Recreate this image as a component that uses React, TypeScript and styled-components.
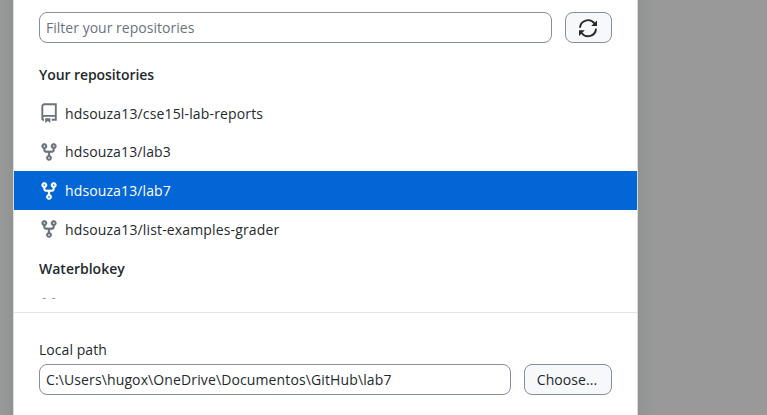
import React from 'react';
import styled, { createGlobalStyle } from 'styled-components';

const GlobalStyle = createGlobalStyle`
  * { box-sizing: border-box; }
  body { margin: 0; background: #999; overflow: hidden; }
  body, button, input { font-family: 'Open Sans', 'Noto Sans', sans-serif; font-size: 14px; color: #24292e; }
`;

const Backdrop = styled.div`
  height: 415px;
  padding-left: 13px;
  background: linear-gradient(90deg, #999 0, #919393 13px, #919393 638px, #999 656px);
`;

const Dialog = styled.main`
  width: 625px;
  height: 415px;
  display: flex;
  flex-direction: column;
  background: #fff;
  border: solid #dadddf;
  border-width: 0 1px;
`;

const FilterRow = styled.div`
  display: flex;
  gap: 13px;
  padding: 12px 25px 0;
`;

const TextBox = styled.input<{ $spacing: number }>`
  flex: 1;
  min-width: 0;
  height: 31px;
  padding: 0 6px;
  border: 1px solid #868e99;
  border-radius: 8px;
  background: #fff;
  outline: none;
  letter-spacing: ${(p) => p.$spacing}px;
  &::placeholder { color: #6a737d; opacity: 1; }
`;

const Button = styled.button<{ $width: number }>`
  width: ${(p) => p.$width}px;
  height: 31px;
  padding: 0 2px 0 0;
  display: flex;
  align-items: center;
  justify-content: center;
  border: 1px solid #868e99;
  border-radius: 8px;
  background: #f6f8fa;
`;

const List = styled.div`
  height: 244px;
  margin-top: 12px;
  overflow: hidden;
`;

const Row = styled.div<{ $selected?: boolean }>`
  height: 38.75px;
  display: flex;
  align-items: center;
  gap: 6px;
  padding: 0 25px;
  white-space: nowrap;
  background: ${(p) => (p.$selected ? '#0366d6' : 'transparent')};
  color: ${(p) => (p.$selected ? '#fff' : '#24292e')};
  svg { color: ${(p) => (p.$selected ? '#fff' : '#6a737d')}; }
`;

const GroupTitle = styled(Row)`
  font-weight: 600;
`;

const Label = styled.span<{ $spacing?: number }>`
  letter-spacing: ${(p) => p.$spacing ?? 0}px;
`;

const PathSection = styled.section`
  margin-top: 13px;
  flex: 1;
  border-top: 1px solid #e1e4e8;
  padding: 27px 25px 0;
`;

const PathLabel = styled.label`
  display: block;
  height: 24px;
  line-height: 20px;
`;

const PathRow = styled.div`
  display: flex;
  gap: 13px;
`;

const Icon = styled.svg`
  width: 20px;
  height: 20px;
  flex: none;
  fill: currentColor;
`;

const RepoIcon = () => (
  <Icon viewBox="0 0 20 20">
    <path
      fill="none"
      stroke="currentColor"
      strokeWidth="1.9"
      d="M5 17.1A2 2 0 0 1 3.3 15V3.4A2.1 2.1 0 0 1 5.4 1.3H16.8V16.8H12.7M3.3 14.6Q3.6 12.9 5.4 12.9H16.8"
    />
    <path d="M6.2 15.2H11.4V19.9L8.8 18L6.2 19.9Z" />
  </Icon>
);

const ForkIcon = () => (
  <Icon viewBox="0 0 16 16">
    <path stroke="currentColor" strokeWidth="0.2" fillRule="evenodd" d="M5 3.25a.75.75 0 11-1.5 0 .75.75 0 011.5 0zm0 2.122a2.25 2.25 0 10-1.5 0v.878A2.25 2.25 0 005.75 8.5h1.5v2.128a2.251 2.251 0 101.5 0V8.5h1.5a2.25 2.25 0 002.25-2.25v-.878a2.25 2.25 0 10-1.5 0v.878a.75.75 0 01-.75.75h-4.5A.75.75 0 015 6.25v-.878zm3.75 7.378a.75.75 0 11-1.5 0 .75.75 0 011.5 0zm3-8.75a.75.75 0 100-1.5.75.75 0 000 1.5z" />
  </Icon>
);

const SyncIcon = () => (
  <Icon viewBox="0 0 20 20">
    <path
      fill="none"
      stroke="currentColor"
      strokeWidth="1.9"
      d="M2 9.8A8 8 0 0 1 16.4 5.4M18 10.6A8 8 0 0 1 3.6 15"
    />
    <path d="M19 2.4V8.1H13.2ZM1 18V12.3H6.8Z" />
  </Icon>
);

const repositories = [
  { name: 'hdsouza13/cse15l-lab-reports', spacing: 0.15 },
  { name: 'hdsouza13/lab3', fork: true, spacing: 0.12 },
  { name: 'hdsouza13/lab7', fork: true, selected: true, spacing: 0.12 },
  { name: 'hdsouza13/list-examples-grader', fork: true, spacing: 0.15 },
];

export default function App() {
  return (
    <>
      <GlobalStyle />
      <Backdrop>
        <Dialog>
          <FilterRow>
            <TextBox $spacing={0.02} placeholder="Filter your repositories" />
            <Button $width={47} aria-label="Refresh"><SyncIcon /></Button>
          </FilterRow>
          <List>
            <GroupTitle><Label $spacing={-0.08}>Your repositories</Label></GroupTitle>
            {repositories.map((r) => (
              <Row key={r.name} $selected={r.selected}>
                {r.fork ? <ForkIcon /> : <RepoIcon />}
                <Label $spacing={r.spacing}>{r.name}</Label>
              </Row>
            ))}
            <GroupTitle><Label>Waterblokey</Label></GroupTitle>
            <Row><ForkIcon /></Row>
          </List>
          <PathSection>
            <PathLabel htmlFor="path"><Label $spacing={0.05}>Local path</Label></PathLabel>
            <PathRow>
              <TextBox id="path" $spacing={0.12} defaultValue={'C:\\Users\\hugox\\OneDrive\\Documentos\\GitHub\\lab7'} />
              <Button $width={88}><Label $spacing={0.05}>Choose...</Label></Button>
            </PathRow>
          </PathSection>
        </Dialog>
      </Backdrop>
    </>
  );
}
